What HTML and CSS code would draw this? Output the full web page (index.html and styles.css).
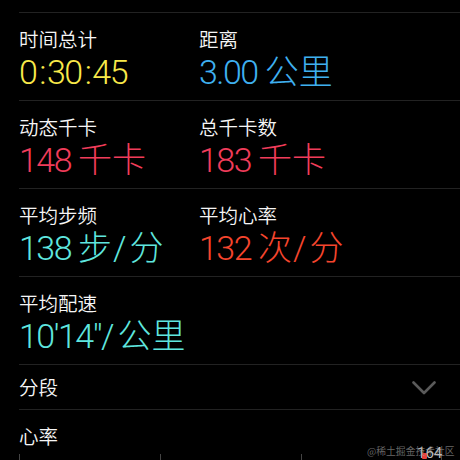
FILE: index.html
```html
<!DOCTYPE html>
<html lang="zh-CN">
<head>
<meta charset="utf-8">
<link rel="stylesheet" href="styles.css">
</head>
<body>
<div class="screen">
  <div class="grid">
    <div class="cell">
      <div class="label">时间总计</div>
      <div class="value yellow"><span class="num">0<span class="colon">:</span>30<span class="colon">:</span>45</span></div>
    </div>
    <div class="cell">
      <div class="label">距离</div>
      <div class="value blue"><span class="num">3.00</span><span class="unit">公里</span></div>
    </div>
    <div class="cell">
      <div class="label">动态千卡</div>
      <div class="value red"><span class="num">148</span><span class="unit">千卡</span></div>
    </div>
    <div class="cell">
      <div class="label">总千卡数</div>
      <div class="value red"><span class="num">183</span><span class="unit">千卡</span></div>
    </div>
    <div class="cell">
      <div class="label">平均步频</div>
      <div class="value cyan"><span class="num">138</span><span class="unit">步<span class="slash">/</span>分</span></div>
    </div>
    <div class="cell">
      <div class="label">平均心率</div>
      <div class="value orange"><span class="num">132</span><span class="unit">次<span class="slash">/</span>分</span></div>
    </div>
    <div class="cell wide">
      <div class="label">平均配速</div>
      <div class="value cyan"><span class="num">10'14"</span><span class="slash tight">/</span>公里</div>
    </div>
  </div>
  <div class="section">
    <span class="section-title">分段</span>
    <svg class="chevron" width="24" height="14" viewBox="0 0 24 14"><polyline points="1.5,1.5 12,12 22.5,1.5" fill="none" stroke="#5a5a5a" stroke-width="2.6" stroke-linecap="round" stroke-linejoin="round"/></svg>
  </div>
  <div class="heart">
    <div class="section-title">心率</div>
    <div class="chart">
      <div class="tick"></div>
      <div class="tick"></div>
      <div class="tick last"></div>
    </div>
  </div>
  <div class="peak"><span class="dot"></span>164</div>
  <div class="watermark">@稀土掘金技术社区</div>
</div>
</body>
</html>
```
FILE: styles.css
```css
html, body {
  margin: 0;
  padding: 0;
  background: #000;
}
body {
  width: 460px;
  height: 460px;
  overflow: hidden;
  font-family: "Noto Sans CJK SC", sans-serif;
  color: #fff;
}
.screen {
  position: relative;
  height: 460px;
  padding: 12px 0 0 19px;
  box-sizing: border-box;
}
.grid {
  display: grid;
  grid-template-columns: 180px 1fr;
  border-top: 1px solid #222;
}
.cell {
  height: 87px;
  border-bottom: 1px solid #222;
}
.wide {
  grid-column: 1 / 3;
}
.label {
  font-size: 19.5px;
  line-height: 26px;
  padding-top: 13px;
  font-weight: 350;
  color: #f6f6f6;
}
.value {
  font-size: 34px;
  line-height: 34px;
  padding-top: 1px;
  font-weight: 300;
  white-space: nowrap;
  font-family: "Noto Sans CJK SC", sans-serif;
}
.num {
  font-family: "Roboto", sans-serif;
  font-size: 34px;
  font-weight: 300;
  letter-spacing: -1.5px;
}
.colon {
  margin: 0 2px 0 3px;
}
.unit {
  margin-left: 7px;
}
.slash {
  font-family: "Roboto", sans-serif;
  font-weight: 300;
  margin: 0 3px 0 1px;
}
.slash.tight {
  margin: 0 3px 0 0;
}
.yellow { color: #f9e94a; }
.blue { color: #3fb0f0; }
.red { color: #f03c5a; }
.cyan { color: #5fe6df; }
.orange { color: #f5452d; }
.section {
  height: 44px;
  border-bottom: 1px solid #222;
  display: flex;
  align-items: center;
  justify-content: space-between;
  padding-right: 24px;
}
.section-title {
  font-size: 19.5px;
  line-height: 26px;
  font-weight: 350;
  color: #f6f6f6;
}
.chevron {
  display: block;
  margin-top: 2px;
}
.heart .section-title {
  padding-top: 13px;
}
.chart {
  display: grid;
  grid-template-columns: repeat(3, 141px);
  margin-top: 5px;
  height: 20px;
}
.tick {
  border-left: 1px solid #444;
}
.tick.last {
  border-right: 1px solid #444;
}
.peak {
  position: absolute;
  left: 417px;
  top: 445px;
  font-family: "Roboto", sans-serif;
  font-size: 15px;
  line-height: 16px;
  color: #bdbdbd;
}
.dot {
  position: absolute;
  left: 5px;
  top: 8px;
  width: 5px;
  height: 6px;
  background: #e8403a;
  border-radius: 1px;
}
.watermark {
  position: absolute;
  left: 367px;
  top: 445px;
  font-size: 9.8px;
  line-height: 12px;
  color: rgba(170, 170, 170, 0.6);
  white-space: nowrap;
}
```
